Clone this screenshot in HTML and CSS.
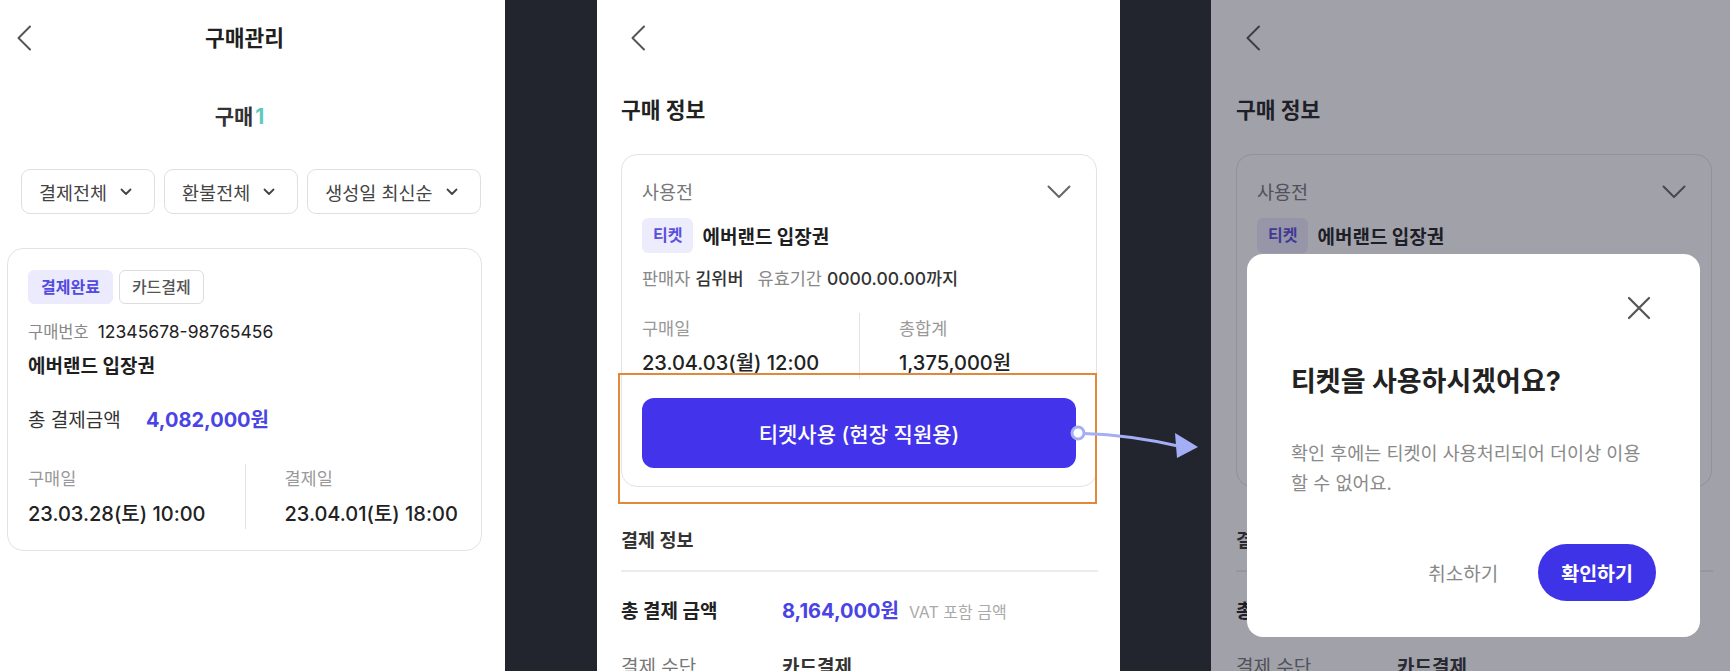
FILE: index.html
```html
<!DOCTYPE html>
<html lang="ko">
<head>
<meta charset="utf-8">
<title>구매관리</title>
<link rel="stylesheet" href="styles.css">
</head>
<body>
<div class="stage">

  <section class="screen list-screen">
    <header class="list-header">
      <span class="back"><svg width="16" height="26" viewBox="0 0 16 26"><polyline points="14,1.5 2.5,13 14,24.5" fill="none" stroke="#555" stroke-width="2" stroke-linecap="round" stroke-linejoin="round"/></svg></span>
      <h1 class="page-title">구매관리</h1>
      <span></span>
    </header>
    <div class="count">구매<span class="count-num">1</span></div>
    <div class="filters">
      <button class="filter">결제전체<svg width="12" height="8" viewBox="0 0 12 8"><polyline points="1.5,1.5 6,6 10.5,1.5" fill="none" stroke="#444" stroke-width="1.8" stroke-linecap="round" stroke-linejoin="round"/></svg></button>
      <button class="filter">환불전체<svg width="12" height="8" viewBox="0 0 12 8"><polyline points="1.5,1.5 6,6 10.5,1.5" fill="none" stroke="#444" stroke-width="1.8" stroke-linecap="round" stroke-linejoin="round"/></svg></button>
      <button class="filter">생성일 최신순<svg width="12" height="8" viewBox="0 0 12 8"><polyline points="1.5,1.5 6,6 10.5,1.5" fill="none" stroke="#444" stroke-width="1.8" stroke-linecap="round" stroke-linejoin="round"/></svg></button>
    </div>
    <article class="order-card">
      <div class="badges"><span class="badge badge-primary">결제완료</span><span class="badge badge-outline">카드결제</span></div>
      <div class="order-no"><span class="label">구매번호</span><span class="value">12345678-98765456</span></div>
      <div class="product">에버랜드 입장권</div>
      <div class="total"><span class="total-label">총 결제금액</span><span class="total-amount">4,082,000원</span></div>
      <div class="dates">
        <div class="date-col"><div class="date-label">구매일</div><div class="date-value">23.03.28(토) 10:00</div></div>
        <div class="date-col"><div class="date-label">결제일</div><div class="date-value">23.04.01(토) 18:00</div></div>
      </div>
    </article>
  </section>

  <div class="divider-strip"></div>

  <section class="screen detail-screen">
    <div class="detail-header"><svg width="16" height="26" viewBox="0 0 16 26"><polyline points="14,1.5 2.5,13 14,24.5" fill="none" stroke="#555" stroke-width="2" stroke-linecap="round" stroke-linejoin="round"/></svg></div>
    <h2 class="section-title">구매 정보</h2>
    <article class="ticket-card">
      <div class="ticket-status"><span>사용전</span><svg width="24" height="14" viewBox="0 0 24 14"><polyline points="1.5,1.5 12,12 22.5,1.5" fill="none" stroke="#666" stroke-width="2" stroke-linecap="round" stroke-linejoin="round"/></svg></div>
      <div class="ticket-name"><span class="tag">티켓</span><span class="name">에버랜드 입장권</span></div>
      <div class="ticket-meta"><span class="meta-label">판매자</span> <span class="meta-value">김위버</span><span class="meta-label spaced">유효기간</span> <span class="meta-value">0000.00.00까지</span></div>
      <div class="dates">
        <div class="date-col"><div class="date-label">구매일</div><div class="date-value">23.04.03(월) 12:00</div></div>
        <div class="date-col"><div class="date-label">총합계</div><div class="date-value">1,375,000원</div></div>
      </div>
      <button class="use-btn">티켓사용 (현장 직원용)</button>
    </article>
    <h3 class="pay-title">결제 정보</h3>
    <div class="rule"></div>
    <div class="pay-row"><span class="pay-label strong">총 결제 금액</span><span class="pay-amount">8,164,000원</span><span class="pay-note">VAT 포함 금액</span></div>
    <div class="pay-row"><span class="pay-label">결제 수단</span><span class="pay-value">카드결제</span></div>
  </section>

  <div class="divider-strip second"></div>

  <section class="screen detail-screen dimmed">
    <div class="detail-header"><svg width="16" height="26" viewBox="0 0 16 26"><polyline points="14,1.5 2.5,13 14,24.5" fill="none" stroke="#555" stroke-width="2" stroke-linecap="round" stroke-linejoin="round"/></svg></div>
    <h2 class="section-title">구매 정보</h2>
    <article class="ticket-card">
      <div class="ticket-status"><span>사용전</span><svg width="24" height="14" viewBox="0 0 24 14"><polyline points="1.5,1.5 12,12 22.5,1.5" fill="none" stroke="#666" stroke-width="2" stroke-linecap="round" stroke-linejoin="round"/></svg></div>
      <div class="ticket-name"><span class="tag">티켓</span><span class="name">에버랜드 입장권</span></div>
      <div class="ticket-meta covered"><span class="meta-label">판매자</span> <span class="meta-value">김위버</span><span class="meta-label spaced">유효기간</span> <span class="meta-value">0000.00.00까지</span></div>
      <div class="dates covered">
        <div class="date-col"><div class="date-label">구매일</div><div class="date-value">23.04.03(월) 12:00</div></div>
        <div class="date-col"><div class="date-label">총합계</div><div class="date-value">1,375,000원</div></div>
      </div>
      <button class="use-btn covered">티켓사용 (현장 직원용)</button>
    </article>
    <h3 class="pay-title">결제 정보</h3>
    <div class="rule"></div>
    <div class="pay-row"><span class="pay-label strong">총 결제 금액</span><span class="pay-amount covered">8,164,000원</span><span class="pay-note covered">VAT 포함 금액</span></div>
    <div class="pay-row"><span class="pay-label">결제 수단</span><span class="pay-value">카드결제</span></div>

    <div class="dim"></div>
    <div class="modal">
      <div class="modal-close"><svg width="24" height="24" viewBox="0 0 24 24"><path d="M2 2 L22 22 M22 2 L2 22" fill="none" stroke="#555" stroke-width="2.2" stroke-linecap="round"/></svg></div>
      <h4 class="modal-title">티켓을 사용하시겠어요?</h4>
      <p class="modal-text">확인 후에는 티켓이 사용처리되어 더이상 이용<br>할 수 없어요.</p>
      <div class="modal-actions">
        <button class="btn-cancel">취소하기</button>
        <button class="btn-confirm">확인하기</button>
      </div>
    </div>
  </section>

  <div class="highlight"></div>
  <svg class="flow-arrow" width="150" height="55" viewBox="0 0 150 55">
    <path d="M24 18.5 Q 70 20 118 31" fill="none" stroke="#a4aef5" stroke-width="3" stroke-linecap="round"/>
    <polygon points="115,18 138,32 117,43" fill="#a4aef5"/>
    <circle cx="18" cy="18" r="6" fill="#fff" stroke="#a4aef5" stroke-width="3"/>
  </svg>
</div>
</body>
</html>
```

FILE: styles.css
```css
* { box-sizing: border-box; margin: 0; padding: 0; }
html, body { width: 1730px; height: 671px; overflow: hidden; }
body {
  font-family: "Inter", "Noto Sans CJK KR", "Noto Sans", sans-serif;
  color: #222;
  background: #22252e;
}
button { font-family: inherit; cursor: pointer; }

.stage { position: relative; display: flex; width: 1730px; height: 671px; overflow: hidden; }
.screen { flex: none; height: 671px; background: #fff; overflow: hidden; position: relative; }
.divider-strip { flex: none; width: 92px; background: #22252e; }
.divider-strip.second { width: 91px; }

/* ---------- list screen ---------- */
.list-screen { width: 505px; padding: 0 23px 0 7px; }
.list-header { height: 75px; display: grid; grid-template-columns: 1fr auto 1fr; align-items: center; }
.list-header .back { display: flex; margin-left: 9px; }
.page-title { font-size: 21.5px; font-weight: 700; line-height: 30px; color: #1f1f1f; }
.count { margin-top: 27px; text-align: center; font-size: 21px; font-weight: 700; line-height: 30px; color: #333; padding-right: 10px; }
.count-num { color: #5fc9bd; margin-left: 2px; }
.filters { margin-top: 37px; padding-left: 14px; display: flex; gap: 9px; }
.filter {
  height: 45px; display: flex; align-items: center; gap: 13px;
  padding: 0 22px 0 17px; border: 1px solid #dfdfe2; border-radius: 9px;
  background: #fff; font-size: 18.5px; color: #444;
}
.order-card { margin-top: 34px; border: 1px solid #e3e3e6; border-radius: 16px; padding: 21px 20px 21px 20px; }
.badges { display: flex; gap: 6px; }
.badge { height: 34px; line-height: 32px; padding: 0 12px; border-radius: 6px; font-size: 16px; }
.badge-primary { background: #ebebfd; border: 1px solid #ebebfd; color: #5249e0; font-weight: 700; }
.badge-outline { border: 1px solid #dcdcdf; color: #555; font-weight: 500; }
.order-no { margin-top: 16px; line-height: 24px; display: flex; align-items: baseline; gap: 9px; }
.order-no .label { font-size: 16.5px; color: #888; }
.order-no .value { font-size: 17.5px; color: #222; }
.product { margin-top: 10px; font-size: 19px; font-weight: 700; line-height: 26px; color: #1f1f1f; }
.total { margin-top: 25px; line-height: 30px; display: flex; align-items: baseline; }
.total-label { width: 118px; font-size: 19px; color: #333; }
.total-amount { font-size: 20px; font-weight: 700; color: #4a44e4; }

.dates { display: grid; grid-template-columns: 1fr 1fr; }
.date-col + .date-col { border-left: 1px solid #e3e3e6; padding-left: 39px; }
.date-label { font-size: 17.5px; color: #999; line-height: 30px; }
.date-value { font-size: 20px; font-weight: 500; line-height: 30px; margin-top: 5px; color: #222; white-space: nowrap; }
.order-card .dates { margin-top: 28px; }

/* ---------- detail screen ---------- */
.detail-screen { width: 523px; padding-left: 24px; }
.detail-screen.dimmed { width: 519px; padding-left: 25px; }
.detail-header { height: 75px; display: flex; align-items: center; padding-left: 9px; }
.section-title { margin-top: 20px; font-size: 21.5px; font-weight: 700; line-height: 30px; color: #222; }
.ticket-card { margin-top: 29px; width: 476px; border: 1px solid #e3e3e6; border-radius: 16px; padding: 24px 20px 18px 20px; }
.ticket-status { display: flex; justify-content: space-between; align-items: center; line-height: 26px; font-size: 18.5px; color: #777; }
.ticket-status svg { margin-right: 5px; }
.ticket-name { margin-top: 13px; display: flex; align-items: center; gap: 9px; }
.tag { height: 35px; line-height: 35px; padding: 0 11px; border-radius: 6px; background: #ececfd; color: #5a4fdc; font-size: 16px; font-weight: 700; }
.name { font-size: 19px; font-weight: 700; color: #1f1f1f; }
.ticket-meta { margin-top: 14px; font-size: 17.5px; line-height: 24px; white-space: nowrap; }
.meta-label { color: #888; }
.meta-label.spaced { margin-left: 14px; }
.meta-value { color: #333; font-weight: 500; }
.ticket-card .dates { margin-top: 22px; }
.ticket-card .date-label { line-height: 32px; }
.ticket-card .date-value { line-height: 32px; margin-top: 2px; }
.use-btn {
  margin-top: 19px; width: 100%; height: 70px; border: 0; border-radius: 12px;
  background: #4333ea; color: #fff; font-size: 21px; font-weight: 500;
}
.pay-title { margin-top: 39px; font-size: 18.5px; font-weight: 700; line-height: 28px; color: #333; }
.rule { margin-top: 16px; width: 477px; height: 2px; background: #ececee; }
.pay-row { margin-top: 25px; display: flex; align-items: baseline; line-height: 28px; white-space: nowrap; }
.pay-row + .pay-row { margin-top: 28px; }
.pay-label { width: 161px; font-size: 19px; color: #777; }
.pay-label.strong { font-weight: 700; color: #222; }
.pay-amount { font-size: 20px; font-weight: 700; color: #4a44e4; }
.pay-note { margin-left: 10px; font-size: 16px; color: #aaa; }
.pay-value { font-size: 19px; font-weight: 600; color: #333; }
.covered { visibility: hidden; }

/* ---------- dim + modal ---------- */
.dim { position: absolute; inset: 0; background: rgba(30, 30, 48, 0.415); }
.modal {
  position: absolute; left: 36px; top: 254px; width: 453px;
  background: #fff; border-radius: 16px; padding: 43px 44px 36px 44px;
}
.modal-close { display: flex; justify-content: flex-end; height: 22px; }
.modal-close svg { margin-right: 5px; margin-top: -1px; }
.modal-title { margin-top: 45px; font-size: 27px; font-weight: 700; line-height: 36px; color: #222; }
.modal-text { margin-top: 38px; font-size: 18.5px; line-height: 30px; color: #8a8a8a; white-space: nowrap; }
.modal-actions { margin-top: 46px; display: flex; justify-content: flex-end; align-items: center; gap: 40px; }
.btn-cancel { background: none; border: 0; font-size: 19px; color: #888; }
.btn-confirm {
  height: 57px; padding: 0 23px; border: 0; border-radius: 29px;
  background: #3f33e8; color: #fff; font-size: 19.5px; font-weight: 600;
}

/* ---------- annotation overlay ---------- */
.highlight { position: absolute; left: 618px; top: 373px; width: 479px; height: 131px; border: 2px solid #e2883b; pointer-events: none; }
.flow-arrow { position: absolute; left: 1060px; top: 415px; }
```
